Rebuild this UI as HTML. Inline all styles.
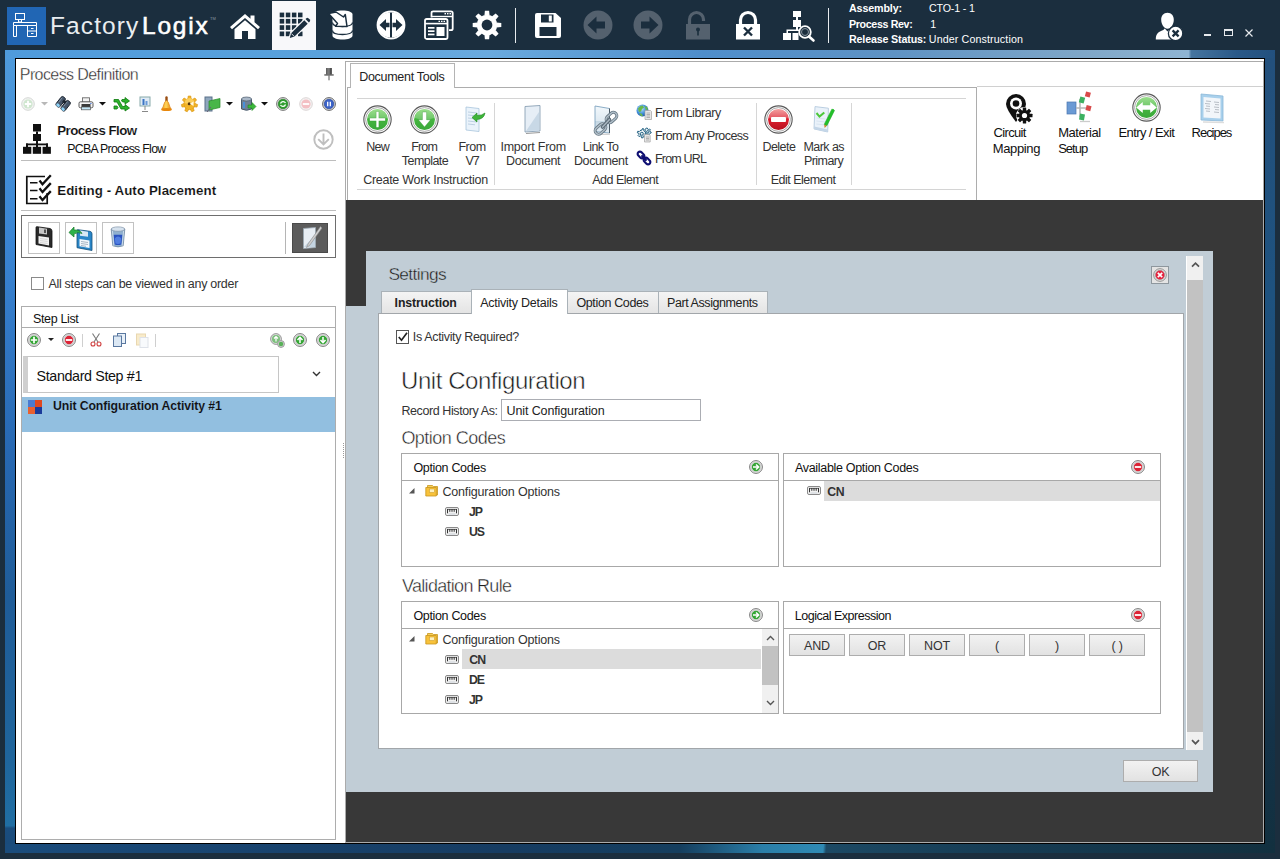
<!DOCTYPE html>
<html><head><meta charset="utf-8"><title>FactoryLogix</title>
<style>
*{box-sizing:border-box;margin:0;padding:0}
html,body{width:1280px;height:859px;overflow:hidden}
body{background:#1b2e3e;font-family:"Liberation Sans",sans-serif;font-size:12px;color:#1a1a1a;position:relative}
.a{position:absolute}
.t{position:absolute;white-space:nowrap;line-height:1}
.b{font-weight:bold}
svg{position:absolute;overflow:visible}
#band{left:5px;top:50px;width:1270px;height:803px;background:linear-gradient(180deg,#4f9bdc 0%,#3a84d2 25%,#2768b2 50%,#1f5c98 68%,#1f659c 88%,#206ea3 96.6%,#1a4d7e 96.9%,#1a4a78 100%)}
#bandtop{left:5px;top:50px;width:1270px;height:9px;background:linear-gradient(90deg,#4f9bdc 0%,#5aa2dc 25%,#6aaade 38%,#4f8ecb 55%,#5f93c4 70%,#7fa7c8 85%,#8fb4d2 93%,#8fb4d2 93.2%,#46759f 93.4%,#2a5988 97%,#22507e 100%)}
#bandright{left:1264px;top:58px;width:11px;height:795px;background:linear-gradient(180deg,#23507c 0%,#1e527f 30%,#1a4468 60%,#143248 85%,#12303f 100%)}
#bandbot{left:5px;top:844px;width:1270px;height:9px;background:linear-gradient(95deg,#1a4c7c 0.87%,#18426c 23.23%,#163c62 38.98%,#153e5e 53.15%,#2a7ea8 59.61%,#2f8ab4 64.41%,#1c4964 64.65%,#163c54 78.35%,#12303f 100.00%)}
#frame{left:15px;top:58px;width:1250px;height:786px;background:#000}
#main{left:16px;top:59px;width:1248px;height:784px;background:#fff}
.lb{position:absolute;top:634px;width:56px;height:22px;padding-top:1px;border:1px solid #adadad;background:linear-gradient(180deg,#f2f2f2,#e2e2e2);text-align:center;line-height:20px;font-size:12.500px;color:#333;letter-spacing:-0.2px}
</style></head><body>
<div class="a" id="band"></div>
<div class="a" id="bandtop"></div>
<div class="a" id="bandright"></div>
<div class="a" id="bandbot"></div>
<div class="a" id="frame"></div>
<div class="a" id="main"></div>
<!--TOPBAR-->
<div class="a" id="topbar" style="left:0;top:0;width:1280px;height:50px;background:#1b2e3e"></div>
<div class="a" style="left:7px;top:7px;width:39px;height:38px;background:#2166b4"></div>
<svg style="left:7px;top:7px" width="39" height="38" viewBox="0 0 39 38" fill="none" stroke="#fff" stroke-width="1"><rect x="8.5" y="6.5" width="9" height="6"/><path d="M11.5 12.5v2.5h3v-2.5M6.500 15.5h23v3h-23zM6.500 18.500v11h3v-11M20.500 18.500v11h9v-11M20.500 24h9M24 21.500h2.500M24 26.500h2.500"/></svg>
<div class="t" style="left:50px;top:14px;font-size:24.5px;color:#e9edf0;letter-spacing:1.1px">Factory</div>
<div class="t" style="left:142px;top:14px;font-size:24.5px;color:#fff;letter-spacing:1.8px;-webkit-text-stroke:0.55px #fff">Logix</div>
<div class="t" style="left:210px;top:17px;font-size:4px;color:#8a98a4">TM</div>
<!-- home -->
<svg style="left:229px;top:12px" width="32" height="28" viewBox="0 0 32 28"><path fill="#fff" d="M16 2 L1 15 L3 17.200 L16 6 L29 17.200 L31 15 L25.500 10.200 V3.500 H21.500 V6.800 Z"/><path fill="#fff" d="M16 8.300 L5.500 17.300 V27 H13 V19 H19 V27 H26.500 V17.300 Z"/></svg>
<!-- active tab -->
<div class="a" style="left:272px;top:1px;width:44px;height:49px;background:#f8f8fa"></div>
<svg style="left:279px;top:12px" width="32" height="28" viewBox="0 0 32 28"><g fill="#1b2e3e"><rect x="0.7" y="0.6" width="4.5" height="4.7"/><rect x="6.8" y="0.6" width="4.5" height="4.7"/><rect x="12.9" y="0.6" width="4.5" height="4.7"/><rect x="19.0" y="0.6" width="4.5" height="4.7"/><rect x="0.7" y="6.9" width="4.5" height="4.7"/><rect x="6.8" y="6.9" width="4.5" height="4.7"/><rect x="12.9" y="6.9" width="4.5" height="4.7"/><rect x="19.0" y="6.9" width="4.5" height="4.7"/><rect x="0.7" y="13.2" width="4.5" height="4.7"/><rect x="6.8" y="13.2" width="4.5" height="4.7"/><rect x="12.9" y="13.2" width="4.5" height="4.7"/><rect x="19.0" y="13.2" width="4.5" height="4.7"/><rect x="0.7" y="19.5" width="4.5" height="4.7"/><rect x="6.8" y="19.5" width="4.5" height="4.7"/><rect x="12.9" y="19.5" width="4.5" height="4.7"/><rect x="19.0" y="19.5" width="4.5" height="4.7"/></g><g stroke="#f8f8fa" stroke-width="2.400" fill="#1b2e3e" stroke-linejoin="round"><path d="M25.300 8.300L28.700 11.700 15.500 24.500l-4.700 1.500 1.300-4.800z"/><path d="M26.300 7.300l1-1q1-.8 2 0l1.400 1.400q.8 1 0 2l-1 1z"/></g><g fill="#1b2e3e"><path d="M25.300 8.300L28.700 11.700 15.500 24.500l-4.700 1.500 1.300-4.800z"/><path d="M26.500 7.100l.9-.9q1-.8 2 0l1.400 1.400q.8 1 0 2l-.9.900z"/></g><path d="M12.300 21.500l2.800 2.800" stroke="#f8f8fa" stroke-width=".9"/></svg>
<!-- db import -->
<svg style="left:329px;top:10px" width="28" height="30" viewBox="0 0 28 30"><path fill="#fff" d="M3.500 4.500C3.500 2 8 .5 13.500 .5S23.500 2 23.500 4.500V25.500C23.500 28 19 29.500 13.500 29.500S3.500 28 3.500 25.500z"/><path d="M3.500 12.500c0 2.500 4.500 4 10 4s10-1.500 10-4M3.500 20.500c0 2.500 4.500 4 10 4s10-1.500 10-4" fill="none" stroke="#1b2e3e" stroke-width="1.300"/><path d="M-.5 3.500L7 2l7.500 5 1.800-2.500 1.700 12-11.500-.3 2-2.700L4.500 9z" fill="#fff" stroke="#1b2e3e" stroke-width="1.500" stroke-linejoin="round"/></svg>
<!-- circle arrows -->
<svg style="left:376px;top:10px" width="30" height="30" viewBox="0 0 30 30"><circle cx="15" cy="15" r="13.500" fill="none" stroke="#fff" stroke-width="1.800"/><path fill="#fff" d="M14 2.500A12.500 12.500 0 0 0 14 27.500zM16 2.500A12.500 12.500 0 0 1 16 27.500z"/><path fill="#1b2e3e" d="M3.500 15l6.500-6v3.700h3.500v4.600H10V21zM26.500 15L20 9v3.700h-3.500v4.600H20V21z"/></svg>
<!-- windows -->
<svg style="left:424px;top:10px" width="30" height="30" viewBox="0 0 30 30"><g fill="none" stroke="#fff" stroke-width="1.800"><path d="M7.500 7.500V3Q7.500 1.300 9.200 1.300H27Q28.700 1.300 28.700 3V18.500Q28.700 20.200 27 20.200H25"/><rect x="1" y="9" width="22.500" height="20" rx="1.800"/></g><g fill="#fff"><path d="M8 5.800h20v1.400H8z"/><rect x="1" y="12.800" width="22.500" height="1.600"/><rect x="4" y="17" width="6.500" height="1.700"/><rect x="4" y="20.300" width="6.500" height="1.700"/><rect x="4" y="23.600" width="6.500" height="1.700"/><rect x="12.500" y="17" width="8" height="9"/><rect x="20.500" y="3" width="1.500" height="1.400"/><rect x="23" y="3" width="1.500" height="1.400"/><rect x="25.500" y="3" width="1.500" height="1.400"/><rect x="14.500" y="10.700" width="1.500" height="1.300"/><rect x="17" y="10.700" width="1.500" height="1.300"/><rect x="19.500" y="10.700" width="1.500" height="1.300"/></g></svg>
<!-- gear -->
<svg style="left:472px;top:10px" width="30" height="30" viewBox="-15 -15 30 30"><g fill="#fff"><circle r="10.300"/><g><path d="M-2.600 -9.500L-2.100 -14.300H2.100L2.600 -9.500z"/></g><g transform="rotate(45)"><path d="M-2.600 -9.500L-2.100 -14.300H2.100L2.600 -9.500z"/></g><g transform="rotate(90)"><path d="M-2.600 -9.500L-2.100 -14.300H2.100L2.600 -9.500z"/></g><g transform="rotate(135)"><path d="M-2.600 -9.500L-2.100 -14.300H2.100L2.600 -9.500z"/></g><g transform="rotate(180)"><path d="M-2.600 -9.500L-2.100 -14.300H2.100L2.600 -9.500z"/></g><g transform="rotate(225)"><path d="M-2.600 -9.500L-2.100 -14.300H2.100L2.600 -9.500z"/></g><g transform="rotate(270)"><path d="M-2.600 -9.500L-2.100 -14.300H2.100L2.600 -9.500z"/></g><g transform="rotate(315)"><path d="M-2.600 -9.500L-2.100 -14.300H2.100L2.600 -9.500z"/></g></g><circle r="5.400" fill="#1b2e3e"/></svg>
<div class="a" style="left:515px;top:8px;width:1px;height:35px;background:#e8ecef"></div>
<!-- save -->
<svg style="left:535px;top:13px" width="26" height="25" viewBox="0 0 26 25"><path fill="#fff" d="M2 0h18.500L26 5v18q0 2-2 2H2q-2 0-2-2V2q0-2 2-2z"/><rect x="6" y="1.500" width="12.500" height="8" fill="#1b2e3e"/><rect x="13.800" y="2.500" width="3" height="6" fill="#fff"/><rect x="4.500" y="14" width="17" height="9" fill="#1b2e3e"/></svg>
<!-- back dim -->
<svg style="left:583px;top:10px" width="30" height="30" viewBox="0 0 30 30"><circle cx="15" cy="15" r="14.500" fill="#54616e"/><path fill="#1b2e3e" d="M4.500 15l9-8.500v5H22v7h-8.500v5z"/></svg>
<svg style="left:633px;top:10px" width="30" height="30" viewBox="0 0 30 30"><circle cx="15" cy="15" r="14.500" fill="#54616e"/><path fill="#1b2e3e" d="M25.500 15l-9-8.500v5H8v7h8.500v5z"/></svg>
<!-- unlock dim -->
<svg style="left:685px;top:11px" width="26" height="29" viewBox="0 0 26 29"><path d="M4.500 14V8.500a7 7 0 0 1 14 0V10" fill="none" stroke="#54616e" stroke-width="3.200"/><rect x="1" y="13" width="24" height="15.500" fill="#54616e"/><circle cx="13" cy="18.500" r="2" fill="#1b2e3e"/><rect x="12.200" y="19" width="1.600" height="5.500" fill="#1b2e3e"/></svg>
<!-- lock x -->
<svg style="left:735px;top:11px" width="26" height="29" viewBox="0 0 26 29"><path d="M5.500 14V9a7.500 7.500 0 0 1 15 0V14" fill="none" stroke="#fff" stroke-width="3.200"/><rect x="1" y="13" width="24" height="15.500" fill="#fff"/><path d="M9 16.500l8 8M17 16.500l-8 8" stroke="#1b2e3e" stroke-width="2.400"/></svg>
<!-- flow search -->
<svg style="left:783px;top:10px" width="32" height="32" viewBox="0 0 32 32"><g fill="#fff"><rect x="10" y="1" width="8" height="6"/><rect x="13" y="7" width="2" height="3"/><rect x="10" y="10" width="8" height="7"/><rect x="13" y="17" width="2" height="3"/><path d="M3.500 19.500h14v1.500h-12.500v3h-1.500z"/><rect x="0" y="23" width="8" height="7"/><rect x="9.500" y="23" width="6" height="7"/></g><circle cx="22" cy="22" r="5.800" fill="#1b2e3e" stroke="#fff" stroke-width="1.800"/><circle cx="22" cy="22" r="3.500" fill="none" stroke="#8a96a0" stroke-width="1"/><path d="M26 26.500l4.500 4" stroke="#fff" stroke-width="2.600" stroke-linecap="round"/></svg>
<div class="a" style="left:828px;top:8px;width:1px;height:35px;background:#e8ecef"></div>
<div class="t b" style="left:849.0px;top:3px;font-size:10.7px;color:#fff;letter-spacing:-0.13px">Assembly:</div>
<div class="t" style="left:929.0px;top:3px;font-size:10.7px;color:#fff;letter-spacing:-0.17px">CTO-1 - 1</div>
<div class="t b" style="left:849.0px;top:19px;font-size:10.7px;color:#fff;letter-spacing:-0.36px">Process Rev:</div>
<div class="t" style="left:930.2px;top:19px;font-size:10.7px;color:#fff;letter-spacing:0.00px">1</div>
<div class="t b" style="left:849.0px;top:34px;font-size:10.7px;color:#fff;letter-spacing:-0.16px">Release Status:</div>
<div class="t" style="left:928.8px;top:34px;font-size:10.7px;color:#fff;letter-spacing:0.12px">Under Construction</div>
<!-- user -->
<svg style="left:1155px;top:12px" width="30" height="30" viewBox="0 0 30 30"><g fill="#fff"><path d="M12.500 .8c4 0 6.300 3 6.300 7 0 4.500-2.800 9-6.300 9s-6.300-4.500-6.300-9c0-4 2.300-7 6.300-7z"/><path d="M.8 27.500c0-6 2.500-7.500 7.500-9.500l1.500-1.500 2.700 3 2.700-3 1.500 1.500c2 .8 3.500 1.500 4.500 2.500L18 27.500z"/></g><circle cx="20.600" cy="21.400" r="7.200" fill="#fff" stroke="#1b2e3e" stroke-width="1.300"/><path d="M17.600 18.400l6 6M23.600 18.400l-6 6" stroke="#1b2e3e" stroke-width="2.300"/></svg>
<div class="a" style="left:1204px;top:34px;width:7px;height:2px;background:#e6e9ec"></div>
<div class="a" style="left:1224px;top:29px;width:9px;height:7px;border:1px solid #e6e9ec;border-top-width:2px"></div>
<svg style="left:1245px;top:28.500px" width="8" height="8" viewBox="0 0 8 8"><path d="M.5.500l7 7M7.500.500l-7 7" stroke="#e6e9ec" stroke-width="1.200"/></svg>
<!--/TOPBAR-->
<!--LEFT-->
<div class="t" style="left:19.8px;top:67px;font-size:16px;color:#222;letter-spacing:-0.59px;-webkit-text-stroke:0.35px #fff">Process Definition</div>
<!-- pin -->
<svg style="left:324px;top:68px" width="10" height="13" viewBox="0 0 10 13"><rect x="2.200" y="0" width="5.600" height="6.500" fill="#7a7a7a"/><rect x="5.800" y="0" width="2" height="6.500" fill="#505050"/><rect x="2.200" y="0" width="1" height="6.500" fill="#555"/><rect x=".3" y="6.300" width="9.400" height="1.300" fill="#555"/><rect x="4.500" y="7.500" width="1" height="4.800" fill="#555"/></svg>
<!-- toolbar row y=104 -->
<svg style="left:21px;top:97px" width="14" height="14" viewBox="0 0 14 14"><circle cx="7" cy="7" r="6.300" fill="#f2f4f2" stroke="#d5d8d5"/><circle cx="7" cy="7" r="4.600" fill="#cfe6cf"/><path d="M7 3.800v6.400M3.800 7h6.400" stroke="#fff" stroke-width="1.800"/></svg>
<svg style="left:41px;top:102px" width="7" height="4" viewBox="0 0 7 4"><path d="M0 0h7L3.500 3.500z" fill="#b8b8b8"/></svg>
<svg style="left:55px;top:97px" width="16" height="14" viewBox="0 0 16 14"><g transform="rotate(38 8 7)"><rect x="2.300" y="1" width="5" height="11.500" rx="2" fill="#46566a" stroke="#1c2530" stroke-width=".9"/><rect x="8.700" y="1" width="5" height="11.500" rx="2" fill="#46566a" stroke="#1c2530" stroke-width=".9"/><rect x="6" y="3" width="4" height="3" fill="#1c2530"/><ellipse cx="4.800" cy="11" rx="2" ry="1.500" fill="#8fd2f6"/><ellipse cx="11.200" cy="11" rx="2" ry="1.500" fill="#8fd2f6"/><path d="M3.500 2.500v6M10 2.500v6" stroke="#8a9aac" stroke-width=".8"/></g></svg>
<svg style="left:78px;top:97px" width="16" height="14" viewBox="0 0 16 14"><rect x="4.500" y=".8" width="7" height="4.500" fill="#f2f2f2" stroke="#6a6a6a" stroke-width=".9"/><rect x="1" y="4.800" width="14" height="6" rx="1.500" fill="#f4f4f4" stroke="#4a4a4a" stroke-width=".9"/><rect x="3.500" y="7" width="9" height="3.500" fill="#3a3a3a"/><rect x="3.500" y="10" width="9" height="2.800" fill="#c4e8f8" stroke="#555" stroke-width=".7"/><rect x="12.300" y="6" width="1.200" height="1" fill="#3a6ad8"/></svg>
<svg style="left:99px;top:102px" width="7" height="4" viewBox="0 0 7 4"><path d="M0 0h7L3.500 3.500z" fill="#111"/></svg>
<svg style="left:113px;top:97px" width="17" height="14" viewBox="0 0 17 14"><path d="M1 2.500h4.500l4 7H12V7.500L16.500 11 12 14v-2H8l-4-7H1zM1 9h3l1 1.500-1 1.500H1zM9 2.500h3V.500L16.500 4 12 7V5h-2L8.500 4z" fill="#2db32d" stroke="#0c7a0c" stroke-width=".8"/></svg>
<svg style="left:138px;top:96px" width="14" height="16" viewBox="0 0 14 16"><rect x="2" y="1" width="10" height="9" fill="#dfeaf5" stroke="#8aa"/><rect x="4.500" y="3" width="2" height="6" fill="#3b74c4"/><rect x="7.500" y="5" width="2" height="4" fill="#6a9ad8"/><path d="M7 10v4M4 15.500h6" stroke="#888" stroke-width="1"/></svg>
<svg style="left:160px;top:96px" width="13" height="16" viewBox="0 0 13 16"><defs><linearGradient id="bl" x1="0" y1="0" x2="1" y2="0"><stop offset="0" stop-color="#f09a18"/><stop offset=".45" stop-color="#ffd45a"/><stop offset="1" stop-color="#e8860c"/></linearGradient></defs><rect x="5.300" y=".3" width="2.400" height="5.500" rx="1.200" fill="#9a4e12"/><path d="M6.500 4.500C3.800 5.500 4 10 1.800 13.200H11.200C9 10 9.200 5.500 6.500 4.500z" fill="url(#bl)" stroke="#d87808" stroke-width=".6"/><ellipse cx="6.500" cy="13.600" rx="5.300" ry="1.500" fill="#e8880c"/></svg>
<svg style="left:181px;top:96px" width="17" height="16" viewBox="-8.500 -8 17 16"><g fill="#f2b428" stroke="#d89410" stroke-width=".6"><circle r="5.600"/><path d="M-1.700 -5L-1.300 -8H1.300L1.700 -5z" transform="rotate(0.0)"/><path d="M-1.700 -5L-1.300 -8H1.300L1.700 -5z" transform="rotate(51.4)"/><path d="M-1.700 -5L-1.300 -8H1.300L1.700 -5z" transform="rotate(102.9)"/><path d="M-1.700 -5L-1.300 -8H1.300L1.700 -5z" transform="rotate(154.3)"/><path d="M-1.700 -5L-1.300 -8H1.300L1.700 -5z" transform="rotate(205.7)"/><path d="M-1.700 -5L-1.300 -8H1.300L1.700 -5z" transform="rotate(257.1)"/><path d="M-1.700 -5L-1.300 -8H1.300L1.700 -5z" transform="rotate(308.6)"/></g><circle r="5.200" fill="#f2b428"/><path d="M-5 -1a5 5 0 0 1 10 0q-5 2-10 0z" fill="#ffd870" opacity=".7"/><circle cx="-.3" cy="-.3" r="1.500" fill="#5a3a10"/><path d="M.3 -.3L4 -2.500V2z" fill="#fff8e0"/></svg>
<svg style="left:204px;top:96px" width="18" height="17" viewBox="0 0 18 17"><rect x="1" y="1" width="7" height="14" fill="#8fa6bd" stroke="#5a718a"/><path d="M5 5l11-2.500v9L5 14z" fill="#49b649" stroke="#2a8a2a" stroke-width=".7"/><path d="M3 16l4-5" stroke="#667" stroke-width="1"/></svg>
<svg style="left:226px;top:102px" width="7" height="4" viewBox="0 0 7 4"><path d="M0 0h7L3.500 3.500z" fill="#111"/></svg>
<svg style="left:240px;top:96px" width="16" height="16" viewBox="0 0 16 16"><path d="M1.500 3h10v10q-5 2.500-10 0z" fill="#6f8196" stroke="#4a5a6c"/><ellipse cx="6.500" cy="3" rx="5" ry="2" fill="#aab8c8" stroke="#4a5a6c" stroke-width=".7"/><path d="M8 9h4V6.500l4 4-4 4V12H8z" fill="#3cb83c" stroke="#1e8a1e" stroke-width=".6"/><rect x="3" y="6" width="2" height="6" fill="#4a90d8"/></svg>
<svg style="left:261px;top:102px" width="7" height="4" viewBox="0 0 7 4"><path d="M0 0h7L3.500 3.500z" fill="#111"/></svg>
<svg style="left:276px;top:97px" width="14" height="14" viewBox="0 0 14 14"><circle cx="7" cy="7" r="6.400" fill="#e6e6e6" stroke="#777"/><circle cx="7" cy="7" r="4.800" fill="#2f9e2f" stroke="#1b6e1b" stroke-width=".6"/><path d="M4.500 6.500a2.700 2.700 0 0 1 5-.5M9.500 7.500a2.700 2.700 0 0 1-5 .5" stroke="#fff" stroke-width="1.200" fill="none"/></svg>
<svg style="left:299px;top:97px" width="14" height="14" viewBox="0 0 14 14"><circle cx="7" cy="7" r="6.300" fill="#f4f2f2" stroke="#dcd6d6"/><circle cx="7" cy="7" r="4.600" fill="#f3c0c4"/><path d="M3.800 7h6.400" stroke="#fff" stroke-width="1.800"/></svg>
<svg style="left:322px;top:97px" width="14" height="14" viewBox="0 0 14 14"><circle cx="7" cy="7" r="6.400" fill="#e0e0e0" stroke="#666"/><circle cx="7" cy="7" r="4.800" fill="#3a62c8" stroke="#23408e" stroke-width=".6"/><path d="M5.700 4.800v4.400M8.300 4.800v4.400" stroke="#fff" stroke-width="1.300"/></svg>
<!-- process flow -->
<svg style="left:23px;top:124px" width="28" height="31" viewBox="0 0 28 31"><g fill="#111"><rect x="10" y="0" width="8" height="7.500"/><rect x="13" y="7.500" width="2" height="2.500"/><rect x="10" y="10" width="8" height="7"/><rect x="13" y="17" width="2" height="3"/><rect x="3" y="19.500" width="22" height="1.800"/><rect x="3" y="19.500" width="2" height="4"/><rect x="13" y="19.500" width="2" height="4"/><rect x="23" y="19.500" width="2" height="4"/><rect x="0" y="22.800" width="8.300" height="7"/><rect x="9.800" y="22.800" width="8.300" height="7"/><rect x="19.600" y="22.800" width="8.300" height="7"/></g></svg>
<div class="t b" style="left:57.2px;top:124px;font-size:13.3px;color:#111;letter-spacing:-0.52px;-webkit-text-stroke:0.12px #fff">Process Flow</div>
<div class="t" style="left:67.2px;top:143px;font-size:12.3px;color:#111;letter-spacing:-0.69px">PCBA Process Flow</div>
<svg style="left:313px;top:129px" width="21" height="21" viewBox="0 0 21 21"><circle cx="10.500" cy="10.500" r="9.200" fill="#fff" stroke="#bfbfbf" stroke-width="1.900"/><path d="M10.500 4.500v11M5.200 10.200l5.300 5.300 5.300-5.300" fill="none" stroke="#bfbfbf" stroke-width="1.900"/></svg>
<div class="a" style="left:21px;top:160px;width:315px;height:1px;background:#bdbdbd"></div>
<!-- editing icon -->
<svg style="left:25px;top:174px" width="28" height="32" viewBox="0 0 28 32"><path d="M20 2.500H1.800v27h20.400V19" fill="#fff" stroke="#111" stroke-width="1.700"/><path d="M5 8.700h7.500M5 16.600h7.500M5 24.800h7.500" stroke="#111" stroke-width="1.500"/><path d="M14.500 6.500l3 3.800 8.300-9M14.500 14.300l3 3.800 8.300-9M14.500 22.300l3 3.800 8.300-9" fill="none" stroke="#111" stroke-width="2.300" stroke-linejoin="miter"/></svg>
<div class="t b" style="left:57.2px;top:184px;font-size:13.3px;color:#111;letter-spacing:0.09px;-webkit-text-stroke:0.12px #fff">Editing - Auto Placement</div>
<div class="a" style="left:21px;top:210px;width:315px;height:1px;background:#bdbdbd"></div>
<div class="a" style="left:21px;top:215px;width:315px;height:43px;border:1px solid #6e6e6e;background:#fff"></div>
<div class="a" style="left:28px;top:222px;width:32px;height:32px;border:1px solid #c2c2c2"></div>
<div class="a" style="left:65px;top:222px;width:32px;height:32px;border:1px solid #c2c2c2"></div>
<div class="a" style="left:102px;top:222px;width:32px;height:32px;border:1px solid #c2c2c2"></div>
<svg style="left:35px;top:226px" width="18" height="23" viewBox="0 0 18 23"><path d="M1 1.500Q1 .5 2 .7L15 2.500Q17 3 17 5V21.500L1 18.500z" fill="#2a2a2a" stroke="#111" stroke-width=".8"/><path d="M4 1.500L12 2.800V8.500L4 7.500z" fill="#c8c8c8"/><rect x="9" y="3.500" width="2" height="3.500" fill="#555"/><path d="M3.500 10l10.500 1.500v8L3.500 17.500z" fill="#f2f2f2"/><path d="M5 12.500l7.500 1M5 14.500l7.500 1M5 16.500l7.500 1" stroke="#ccc" stroke-width=".7"/></svg>
<svg style="left:68px;top:225px" width="26" height="27" viewBox="0 0 26 27"><path d="M9 5.500Q9 4.500 10 4.700L22 6.300Q24 6.800 24 8.800V25.500L9 22.700z" fill="#2a86c8" stroke="#14507c" stroke-width=".8"/><path d="M12 5.500l8 1.200v5l-8-1z" fill="#d8e8f4"/><path d="M11.500 14l10 1.500v7.500l-10-1.800z" fill="#f4f8fc"/><path d="M13 16.500l7 1M13 18.500l7 1M13 20.500l5 .8" stroke="#89a" stroke-width=".7"/><path d="M1 7.500L6 2v3q6-.5 8 3.500Q10 6.500 6 9v3z" fill="#2fb24a" stroke="#157a2a" stroke-width=".7"/></svg>
<svg style="left:110px;top:226px" width="16" height="22" viewBox="0 0 20 25" preserveAspectRatio="none"><path d="M1.500 3.500h17l-2 19q-6.500 2.500-13 0z" fill="#8fb0cf" stroke="#607a94" stroke-width=".8"/><ellipse cx="10" cy="3.500" rx="8.500" ry="2.500" fill="#d6e2ee" stroke="#7a8ea4" stroke-width=".8"/><path d="M4.500 10l11 0-1.300 11q-4.200 1.400-8.400 0z" fill="#2a52c0"/><path d="M6 14q4-4 8 0l-.8 6q-3.200 1-6.400 0z" fill="#5a8ae8" opacity=".8"/><path d="M3 5.500l1.800 17M17 5.500l-1.800 17" stroke="#e8f0f8" stroke-width="1" opacity=".8"/></svg>
<div class="a" style="left:285px;top:222px;width:1px;height:32px;background:#b5b5b5"></div>
<div class="a" style="left:292px;top:223px;width:36px;height:30px;background:#5c5c5c;border:1px solid #4a4a4a"></div>
<svg style="left:299px;top:225px" width="24" height="26" viewBox="0 0 24 26"><path d="M4.500 3.500L16.500 2.500V22.500L4.500 23.500z" fill="#e8eef4" stroke="#9aa8b4" stroke-width=".8"/><path d="M5 22l11-12v12z" fill="#c4d4e2"/><path d="M21.500 1.500L9 19l-1.500 3.500 3.200-2.200L23 3z" fill="#cfcfcf" stroke="#8a8a8a" stroke-width=".6"/></svg>
<!-- checkbox -->
<div class="a" style="left:31px;top:277px;width:13px;height:13px;border:1px solid #8a8a8a;background:#fff"></div>
<div class="t" style="left:48.4px;top:278px;font-size:12.5px;color:#333;letter-spacing:-0.29px">All steps can be viewed in any order</div>
<!-- step list -->
<div class="a" style="left:21px;top:306px;width:315px;height:534px;border:1px solid #adadad;background:#fff"></div>
<div class="t" style="left:33px;top:313px;font-size:12.5px;color:#111;letter-spacing:-0.35px">Step List</div>
<div class="a" style="left:21px;top:327px;width:315px;height:1px;background:#adadad"></div>
<svg style="left:27px;top:333px" width="14" height="14" viewBox="0 0 14 14"><circle cx="7" cy="7" r="6.400" fill="#f4f4f4" stroke="#6a6a6a" stroke-width=".9"/><circle cx="7" cy="7" r="5" fill="none" stroke="#b0b0b0" stroke-width=".7"/><circle cx="7" cy="7" r="4.200" fill="#35a535"/><path d="M7 3.800v6.400M3.800 7h6.400" stroke="#fff" stroke-width="1.700"/></svg>
<svg style="left:48px;top:338px" width="6" height="3" viewBox="0 0 6 3"><path d="M0 0h6L3 3z" fill="#222"/></svg>
<svg style="left:62px;top:333px" width="14" height="14" viewBox="0 0 14 14"><circle cx="7" cy="7" r="6.400" fill="#f4f4f4" stroke="#6a6a6a" stroke-width=".9"/><circle cx="7" cy="7" r="5" fill="none" stroke="#b0b0b0" stroke-width=".7"/><circle cx="7" cy="7" r="4.200" fill="#dc2436"/><path d="M3.800 7h6.400" stroke="#fff" stroke-width="1.800"/></svg>
<div class="a" style="left:82px;top:334px;width:1px;height:13px;background:#cfcfcf"></div>
<svg style="left:90px;top:333px" width="12" height="14" viewBox="0 0 12 14"><path d="M2.500 0.500L8 9M9.500 0.500L4 9" stroke="#7a7a7a" stroke-width="1.100" fill="none"/><circle cx="3" cy="11" r="2" fill="none" stroke="#d04040" stroke-width="1.100"/><circle cx="9" cy="11" r="2" fill="none" stroke="#d04040" stroke-width="1.100"/></svg>
<svg style="left:113px;top:333px" width="13" height="14" viewBox="0 0 13 14"><rect x="4.500" y=".5" width="8" height="10" fill="#e8f0f8" stroke="#5a78a0"/><rect x=".5" y="3" width="8" height="10.500" fill="#dce8f4" stroke="#5a78a0"/></svg>
<svg style="left:136px;top:333px" width="13" height="15" viewBox="0 0 13 15" opacity=".55"><rect x=".5" y="1" width="9" height="11" fill="#f4dca0" stroke="#d8b870"/><rect x="4" y="4.500" width="8" height="10" fill="#f4f6fa" stroke="#c4ccd8"/></svg>
<div class="a" style="left:155px;top:334px;width:1px;height:13px;background:#cfcfcf"></div>
<svg style="left:270px;top:333px" width="15" height="15" viewBox="0 0 15 15"><circle cx="6" cy="6" r="5.400" fill="#dcdcdc" stroke="#999"/><circle cx="6" cy="6" r="4" fill="#7cc07c"/><path d="M6 3.500v5M4 5.500l2-2 2 2" stroke="#fff" stroke-width="1.200" fill="none"/><circle cx="11" cy="11" r="3.400" fill="#dcdcdc" stroke="#999"/><circle cx="11" cy="11" r="2.300" fill="#58b058"/></svg>
<svg style="left:293px;top:333px" width="14" height="14" viewBox="0 0 14 14"><circle cx="7" cy="7" r="6.400" fill="#f4f4f4" stroke="#6a6a6a" stroke-width=".9"/><circle cx="7" cy="7" r="5" fill="none" stroke="#b0b0b0" stroke-width=".7"/><circle cx="7" cy="7" r="4.200" fill="#35a535"/><path d="M7 10V5M4.500 7L7 4.300 9.500 7" stroke="#fff" stroke-width="1.500" fill="none"/></svg>
<svg style="left:316px;top:333px" width="14" height="14" viewBox="0 0 14 14"><circle cx="7" cy="7" r="6.400" fill="#f4f4f4" stroke="#6a6a6a" stroke-width=".9"/><circle cx="7" cy="7" r="5" fill="none" stroke="#b0b0b0" stroke-width=".7"/><circle cx="7" cy="7" r="4.200" fill="#35a535"/><path d="M7 4v5M4.500 7L7 9.700 9.500 7" stroke="#fff" stroke-width="1.500" fill="none"/></svg>
<div class="a" style="left:23px;top:356px;width:256px;height:37px;border:1px solid #c6c6c6;background:#fff;border-left:5px solid #cfcfcf"></div>
<div class="t" style="left:36.6px;top:369px;font-size:14.3px;color:#111;letter-spacing:-0.37px">Standard Step #1</div>
<svg style="left:312px;top:371px" width="9" height="6" viewBox="0 0 9 6"><path d="M1 1l3.500 3.500L8 1" fill="none" stroke="#333" stroke-width="1.400"/></svg>
<div class="a" style="left:22px;top:397px;width:313px;height:35px;background:#92bfe0"></div>
<svg style="left:28px;top:400px" width="14" height="14" viewBox="0 0 14 14"><rect x="0" y="0" width="7" height="7" fill="#4a7ad0"/><rect x="7" y="0" width="7" height="7" fill="#e04820"/><rect x="0" y="7" width="7" height="7" fill="#e86030"/><rect x="7" y="7" width="7" height="7" fill="#1a3a9a"/></svg>
<div class="t b" style="left:53.0px;top:400px;font-size:12.3px;color:#111;letter-spacing:-0.12px;-webkit-text-stroke:0.1px #92bfe0">Unit Configuration Activity #1</div>
<!-- splitter -->
<div class="a" style="left:343px;top:443px;width:1px;height:15px;background:repeating-linear-gradient(180deg,#999 0 1px,#fff 1px 2px)"></div>
<!--/LEFT-->
<!--RIBBON-->
<!-- ribbon: white bg y59-200 -->
<div class="a" style="left:347px;top:87px;width:630px;height:113px;border:1px solid #adadad;border-bottom:none;background:#fff"></div>
<div class="a" style="left:977px;top:86px;width:286px;height:1px;background:#d0d0d0"></div>
<div class="a" style="left:350px;top:63px;width:105px;height:25px;border:1px solid #b4b4b4;border-bottom:none;background:#fff"></div>
<div class="t" style="left:359.2px;top:71px;font-size:12.5px;color:#222;letter-spacing:-0.29px">Document Tools</div>
<div class="a" style="left:357px;top:98px;width:609px;height:1px;background:#d4d4d4"></div>
<div class="a" style="left:357px;top:189px;width:609px;height:1px;background:#d4d4d4"></div>
<div class="a" style="left:494px;top:103px;width:1px;height:82px;background:#d6d6d6"></div>
<div class="a" style="left:756px;top:103px;width:1px;height:82px;background:#d6d6d6"></div>
<div class="a" style="left:851px;top:103px;width:1px;height:82px;background:#d6d6d6"></div>
<!-- New -->
<svg style="left:363px;top:105px" width="29" height="29" viewBox="0 0 31 31"><defs><linearGradient id="gg" x1="0" y1="0" x2="0" y2="1"><stop offset="0" stop-color="#7fd66c"/><stop offset=".5" stop-color="#45b53f"/><stop offset="1" stop-color="#3aa83a"/></linearGradient><linearGradient id="gr" x1="0" y1="0" x2="0" y2="1"><stop offset="0" stop-color="#f08a8a"/><stop offset=".5" stop-color="#dc1e2e"/><stop offset="1" stop-color="#b8101e"/></linearGradient><linearGradient id="gs" x1="0" y1="0" x2="0" y2="1"><stop offset="0" stop-color="#f4f4f4"/><stop offset="1" stop-color="#a8a8a8"/></linearGradient></defs><circle cx="15.500" cy="15.500" r="14.600" fill="#fff" stroke="#5a5a5a" stroke-width="1.200"/><circle cx="15.500" cy="15.500" r="12.700" fill="#fff" stroke="#9a9a9a" stroke-width=".9"/><circle cx="15.500" cy="15.500" r="11.200" fill="url(#gg)"/><path d="M4.800 13.500a10.800 10.800 0 0 1 21.400 0q-10.700 4-21.400 0z" fill="#fff" opacity=".22"/><path d="M15.500 7v17M7 15.500h17" stroke="#2f8f2f" stroke-width="3.600" opacity=".5"/><path d="M15.500 7.300v16.400M7.300 15.500h16.400" stroke="#fff" stroke-width="2.500"/></svg>
<div class="t" style="left:366.2px;top:141px;font-size:12.5px;color:#333;letter-spacing:-0.70px">New</div>
<!-- From Template -->
<svg style="left:410px;top:105px" width="29" height="29" viewBox="0 0 31 31"><circle cx="15.500" cy="15.500" r="14.600" fill="#fff" stroke="#5a5a5a" stroke-width="1.200"/><circle cx="15.500" cy="15.500" r="12.700" fill="#fff" stroke="#9a9a9a" stroke-width=".9"/><circle cx="15.500" cy="15.500" r="11.200" fill="url(#gg)"/><path d="M4.800 13.500a10.800 10.800 0 0 1 21.400 0q-10.700 4-21.400 0z" fill="#fff" opacity=".22"/><path d="M13.300 7.500h4.400v8.300h4.300l-6.500 7.700-6.500-7.700h4.300z" fill="#fff" stroke="#2f8f2f" stroke-width=".6" stroke-opacity=".6"/></svg>
<div class="t" style="left:411.2px;top:141px;font-size:12.5px;color:#333;letter-spacing:-0.83px">From</div>
<div class="t" style="left:401.8px;top:155px;font-size:12.5px;color:#333;letter-spacing:-0.54px">Template</div>
<!-- From V7 -->
<svg style="left:463px;top:105px" width="24" height="30" viewBox="0 0 24 30"><path d="M3 2l13 1.500v23L3 25z" fill="#eaf3fb" stroke="#a8c4dc" stroke-width=".8"/><path d="M5 7l9 1M5 10l9 1M5 13l9 1M5 16l9 1M5 19l7 .8" stroke="#b8cce0" stroke-width=".9"/><path d="M22 8q-1 6-8 6.500V17l-5-4.500 5-4.500v2.500q5 0 8-2.500z" fill="#3fb53a" stroke="#1e8a1e" stroke-width=".6"/></svg>
<div class="t" style="left:458.4px;top:141px;font-size:12.5px;color:#333;letter-spacing:-0.46px">From</div>
<div class="t" style="left:465.6px;top:155px;font-size:12.5px;color:#333;letter-spacing:-1.20px">V7</div>
<div class="t" style="left:363.2px;top:174px;font-size:12.5px;color:#333;letter-spacing:-0.28px">Create Work Instruction</div>
<!-- Import From Document -->
<svg style="left:522px;top:104px" width="22" height="32" viewBox="0 0 22 32"><path d="M3 2.500L18 1.500V27L3 28z" fill="#e6eef6" stroke="#8aa0b4" stroke-width=".9"/><path d="M4 27L17 8v18.500z" fill="#c8d8e6"/><path d="M4 29.500l14-1" stroke="#999" stroke-width="1.200"/></svg>
<div class="t" style="left:500.4px;top:141px;font-size:12.5px;color:#333;letter-spacing:-0.22px">Import From</div>
<div class="t" style="left:506.0px;top:155px;font-size:12.5px;color:#333;letter-spacing:-0.34px">Document</div>
<!-- Link to document -->
<svg style="left:590px;top:104px" width="30" height="32" viewBox="0 0 30 32"><defs><linearGradient id="pg" x1="0" y1="0" x2="0" y2="1"><stop offset="0" stop-color="#f2f8fc"/><stop offset=".55" stop-color="#dfeaf2"/><stop offset=".56" stop-color="#c4d6e2"/><stop offset="1" stop-color="#e4eef5"/></linearGradient></defs><path d="M5 2L19.500 4.500V29L5 27.500z" fill="url(#pg)" stroke="#7fa4c0" stroke-width=".9"/><path d="M19.500 4.500V29" stroke="#4a5a66" stroke-width="1"/><path d="M6 30.500l14-.3" stroke="#c8c8c8" stroke-width="1.200"/><g fill="none" stroke-linecap="round"><rect x="-6" y="-3.400" width="12" height="6.800" rx="3.400" transform="translate(21.500 13.500) rotate(-42)" stroke="#6a7a86" stroke-width="3"/><rect x="-6" y="-3.400" width="12" height="6.800" rx="3.400" transform="translate(21.500 13.500) rotate(-42)" stroke="#b4c2cc" stroke-width="1.200"/><rect x="-6" y="-3.400" width="12" height="6.800" rx="3.400" transform="translate(10.500 25) rotate(-42)" stroke="#6a7a86" stroke-width="3"/><rect x="-6" y="-3.400" width="12" height="6.800" rx="3.400" transform="translate(10.500 25) rotate(-42)" stroke="#b4c2cc" stroke-width="1.200"/><path d="M12.500 23l7-7.500" stroke="#5a6a76" stroke-width="3.600"/><path d="M12.500 23l7-7.500" stroke="#a8b6c0" stroke-width="1.400"/></g></svg>
<div class="t" style="left:582.8px;top:141px;font-size:12.5px;color:#333;letter-spacing:-0.54px">Link To</div>
<div class="t" style="left:574.0px;top:155px;font-size:12.5px;color:#333;letter-spacing:-0.41px">Document</div>
<!-- small items -->
<svg style="left:636px;top:104px" width="16" height="16" viewBox="0 0 16 16"><defs><radialGradient id="gl" cx=".4" cy=".35" r=".7"><stop offset="0" stop-color="#bfe4fa"/><stop offset=".6" stop-color="#3f8ed8"/><stop offset="1" stop-color="#1f4fa0"/></radialGradient></defs><circle cx="6.500" cy="6.500" r="6" fill="url(#gl)"/><path d="M2 4.500q2-3 4.500-3l1.500 2-2 1.500-1 2.500-2 .5zM8.500 2l2.500 1 1 2.500-2 .5zM3 9l2.500.5 1.500 2.500-2 .3z" fill="#6ab84a"/><path d="M9 6.500h5.500l1 1v8H9z" fill="#e6e6e6" stroke="#a4a4a4" stroke-width=".7"/><path d="M10.500 9h3.500M10.500 10.500h3.500M10.500 12h3.500M10.500 13.500h3.500" stroke="#9a9a9a" stroke-width=".7"/></svg>
<div class="t" style="left:655.0px;top:107px;font-size:12.5px;color:#333;letter-spacing:-0.42px">From Library</div>
<svg style="left:636px;top:127px" width="16" height="16" viewBox="0 0 16 16"><g fill="#eaf2f6" stroke="#1f5f80" stroke-width="1"><path d="M5 3.200l1-.2.500-1.500 1.500.6-.3 1.500.8.800 1.500-.3.600 1.500L9.300 6.200 9 7.200l1.300 1-.9 1.300-1.400-.7-.9.500v1.500H5.500l-.2-1.500-1-.5-1.300.8-1-1.200L3 7.300 2.800 6.300 1.300 5.800l.4-1.500 1.600.2.700-.8z"/><circle cx="5.800" cy="6.800" r="1.500"/><path d="M10.300 1l1 .1.400 1 1 .4 1-.5.700.8-.6.900.3 1 1 .3v1l-1 .3-.5 1-3.200-.2-1.400-2.800.3-2z"/><circle cx="11.800" cy="4.800" r="1.200"/></g><path d="M8.500 7.500H13l1.200 1.200V15H8.500z" fill="#e6e6e6" stroke="#a4a4a4" stroke-width=".7"/><path d="M10 10h3M10 11.500h3M10 13h3" stroke="#9a9a9a" stroke-width=".7"/></svg>
<div class="t" style="left:655.0px;top:130px;font-size:12.5px;color:#333;letter-spacing:-0.56px">From Any Process</div>
<svg style="left:636px;top:150px" width="16" height="16" viewBox="0 0 16 16"><g fill="none" stroke="#0e0e72" stroke-width="2.100"><rect x="-3.800" y="-2.300" width="7.600" height="4.600" rx="2.300" transform="translate(5 5) rotate(45)"/><rect x="-3.800" y="-2.300" width="7.600" height="4.600" rx="2.300" transform="translate(11 11) rotate(45)"/></g><path d="M6.200 6.200l3.600 3.600" stroke="#0e0e72" stroke-width="2.400" stroke-linecap="round"/></svg>
<div class="t" style="left:655.0px;top:153px;font-size:12.5px;color:#333;letter-spacing:-0.82px">From URL</div>
<div class="t" style="left:592.2px;top:174px;font-size:12.5px;color:#333;letter-spacing:-0.50px">Add Element</div>
<!-- Delete -->
<svg style="left:764px;top:105px" width="29" height="29" viewBox="0 0 31 31"><circle cx="15.500" cy="15.500" r="14.600" fill="#fff" stroke="#5a5a5a" stroke-width="1.200"/><circle cx="15.500" cy="15.500" r="12.700" fill="#fff" stroke="#9a9a9a" stroke-width=".9"/><circle cx="15.500" cy="15.500" r="11.200" fill="url(#gr)"/><path d="M4.800 13.500a10.800 10.800 0 0 1 21.400 0q-10.700 4-21.400 0z" fill="#fff" opacity=".2"/><rect x="7.500" y="12.800" width="16" height="5.400" rx="1" fill="#fff"/></svg>
<div class="t" style="left:762.4px;top:141px;font-size:12.5px;color:#333;letter-spacing:-0.52px">Delete</div>
<!-- Mark as Primary -->
<svg style="left:812px;top:104px" width="24" height="30" viewBox="0 0 24 30"><path d="M3 2.600L16.400 4.200L15.700 28L2 24.900z" fill="#eaf2fa" stroke="#b4cade" stroke-width=".9"/><path d="M2.200 22.500l13.500 3-.1 2.500L2 24.900z" fill="#c4d6e8"/><path d="M4.500 14l9 1M4.400 17l9 1M4.300 20l9 1" stroke="#d6e2ee" stroke-width=".9"/><path d="M4.500 9l3 3.600 4.800-4.200" fill="none" stroke="#4ec83c" stroke-width="2"/><path d="M19.800 5.200l2.700 1.300-7.600 15.200-2.700-1.300z" fill="#22c028" stroke="#18a020" stroke-width=".5"/><path d="M12.200 20.400l2.700 1.300-2.300 2.300z" fill="#c8862a"/><path d="M19.800 5.200q1.500-1.300 2.700 1.300z" fill="#22c028"/></svg>
<div class="t" style="left:803.4px;top:141px;font-size:12.5px;color:#333;letter-spacing:-0.54px">Mark as</div>
<div class="t" style="left:804.0px;top:155px;font-size:12.5px;color:#333;letter-spacing:-0.57px">Primary</div>
<div class="t" style="left:770.8px;top:174px;font-size:12.5px;color:#333;letter-spacing:-0.52px">Edit Element</div>
<!-- right group -->
<svg style="left:1004px;top:93px" width="30" height="32" viewBox="0 0 30 32"><path d="M12 1a10 10 0 0 1 10 10q0 5-10 18Q2 16 2 11A10 10 0 0 1 12 1z" fill="#111"/><circle cx="12" cy="10.500" r="6" fill="#fff"/><circle cx="12" cy="10.500" r="3.300" fill="#111"/><g transform="translate(20.500 22.500)"><circle r="8.500" fill="#fff"/><g fill="#111"><circle r="5.500"/><g><rect x="-1.700" y="-8" width="3.400" height="4" rx=".5"/></g><g transform="rotate(45)"><rect x="-1.700" y="-8" width="3.400" height="4" rx=".5"/></g><g transform="rotate(90)"><rect x="-1.700" y="-8" width="3.400" height="4" rx=".5"/></g><g transform="rotate(135)"><rect x="-1.700" y="-8" width="3.400" height="4" rx=".5"/></g><g transform="rotate(180)"><rect x="-1.700" y="-8" width="3.400" height="4" rx=".5"/></g><g transform="rotate(225)"><rect x="-1.700" y="-8" width="3.400" height="4" rx=".5"/></g><g transform="rotate(270)"><rect x="-1.700" y="-8" width="3.400" height="4" rx=".5"/></g><g transform="rotate(315)"><rect x="-1.700" y="-8" width="3.400" height="4" rx=".5"/></g></g><circle r="2.600" fill="#fff"/></g></svg>
<div class="t" style="left:993.6px;top:126px;font-size:13px;color:#111;letter-spacing:-0.69px">Circuit</div>
<div class="t" style="left:992.8px;top:142px;font-size:13px;color:#111;letter-spacing:-0.38px">Mapping</div>
<svg style="left:1066px;top:92px" width="30" height="32" viewBox="0 0 30 32"><rect x="1" y="10" width="9" height="12" fill="#6a9ad4" stroke="#4a76b0" stroke-width=".7"/><path d="M10 16h4M14 7v18M14 7h4M14 25h4M14 16h6" stroke="#b8b8b8" stroke-width="1.600" fill="none"/><rect x="13.500" y="5" width="5" height="6" fill="#3cb060" transform="rotate(15 16 8)"/><rect x="19.500" y="0" width="5" height="5" fill="#d84a4a" transform="rotate(15 22 2)"/><rect x="20" y="13.500" width="5" height="5" fill="#d84a4a" transform="rotate(15 22 16)"/><rect x="13.500" y="22" width="5" height="6" fill="#3cb060" transform="rotate(10 16 25)"/><path d="M14 29.500h10" stroke="#ccc" stroke-width="1.300"/></svg>
<div class="t" style="left:1058.2px;top:126px;font-size:13px;color:#111;letter-spacing:-0.48px">Material</div>
<div class="t" style="left:1058.2px;top:142px;font-size:13px;color:#111;letter-spacing:-1.01px">Setup</div>
<svg style="left:1132px;top:93px" width="29" height="29" viewBox="0 0 31 31"><circle cx="15.500" cy="15.500" r="14.600" fill="#fff" stroke="#5a5a5a" stroke-width="1.200"/><circle cx="15.500" cy="15.500" r="12.700" fill="#fff" stroke="#9a9a9a" stroke-width=".9"/><circle cx="15.500" cy="15.500" r="11.200" fill="url(#gg)"/><path d="M4.800 13.500a10.800 10.800 0 0 1 21.400 0q-10.700 4-21.400 0z" fill="#fff" opacity=".22"/><path d="M4.500 15.500l7-6v3.500h8v-3.500l7 6-7 6v-3.500h-8v3.500z" fill="#fff"/></svg>
<div class="t" style="left:1118.4px;top:126px;font-size:13px;color:#111;letter-spacing:-0.58px">Entry / Exit</div>
<svg style="left:1199px;top:92px" width="28" height="32" viewBox="0 0 28 32"><path d="M2 2l22 2v25L2 28z" fill="#a8d0ec" stroke="#8ab8d8" stroke-width=".8"/><path d="M4.500 5l17 1.600v20L4.500 25.500z" fill="#f2f6fa"/><path d="M7 9l5 .5M6 11.500l5 .5M7 14l4 .4M6 16.500l5 .5M7 19l4 .4M15 10l5 .5M16 12.500l4 .4M15 15l5 .5M16 17.500l4 .4M15 20l5 .5" stroke="#b8bec6" stroke-width="1"/><path d="M4 30l21 .5" stroke="#ddd" stroke-width="1.300"/></svg>
<div class="t" style="left:1191.6px;top:126px;font-size:13px;color:#111;letter-spacing:-1.04px">Recipes</div>
<!--/RIBBON-->
<!--WORK-->
<div class="a" style="left:345px;top:61px;width:919px;height:782px;border:1px solid #ababab"></div>
<div class="a" style="left:346px;top:200px;width:917px;height:642px;background:#383838"></div>
<div class="a" style="left:366px;top:251px;width:847px;height:541px;background:#c1cdd6"></div>
<div class="a" style="left:346px;top:306px;width:20px;height:486px;background:#c1cdd6"></div>
<div class="t" style="left:388.4px;top:266px;font-size:17.3px;color:#1c1c1c;letter-spacing:-0.61px;-webkit-text-stroke:0.4px #c1cdd6">Settings</div>
<!-- close btn -->
<div class="a" style="left:1151px;top:266px;width:18px;height:18px;border:1px solid #8e979e;background:#e4e4e4"></div>
<svg style="left:1153px;top:268px" width="14" height="14" viewBox="0 0 14 14"><circle cx="7" cy="7" r="6.300" fill="#ececec" stroke="#777" stroke-width=".8"/><circle cx="7" cy="7" r="4.700" fill="#e8203c" stroke="#999" stroke-width=".6"/><path d="M4.800 4.800l4.400 4.400M9.200 4.800l-4.400 4.400" stroke="#fff" stroke-width="1.700"/></svg>
<!-- scrollbar -->
<div class="a" style="left:1186px;top:256px;width:17px;height:494px;background:#f0f0f0;border-left:1px solid #fff"></div>
<div class="a" style="left:1187px;top:280px;width:16px;height:452px;background:#c2c2c2"></div>
<svg style="left:1191px;top:261px" width="9" height="7" viewBox="0 0 9 7"><path d="M1 5.600L4.500 2.100 8 5.600" fill="none" stroke="#555" stroke-width="1.700"/></svg>
<svg style="left:1191px;top:739px" width="9" height="7" viewBox="0 0 9 7"><path d="M1 1.200L4.500 4.700 8 1.200" fill="none" stroke="#555" stroke-width="1.700"/></svg>
<!-- tab content -->
<div class="a" style="left:378px;top:313px;width:806px;height:436px;border:1px solid #a2a6aa;background:#fff"></div>
<!-- tabs -->
<div class="a" style="left:381px;top:291px;width:91px;height:22px;border:1px solid #aab2b8;border-bottom:none;background:linear-gradient(180deg,#f4f4f4,#e4e4e4)"></div>
<div class="a" style="left:567px;top:291px;width:92px;height:22px;border:1px solid #aab2b8;border-left:none;border-bottom:none;background:linear-gradient(180deg,#f4f4f4,#e4e4e4)"></div>
<div class="a" style="left:658px;top:291px;width:110px;height:22px;border:1px solid #aab2b8;border-bottom:none;background:linear-gradient(180deg,#f4f4f4,#e4e4e4)"></div>
<div class="a" style="left:471px;top:289px;width:97px;height:25px;border:1px solid #aab2b8;border-bottom:none;background:#fff"></div>
<div class="t b" style="left:394.6px;top:297px;font-size:12.3px;color:#222;letter-spacing:-0.13px">Instruction</div>
<div class="t" style="left:480.2px;top:297px;font-size:12.5px;color:#222;letter-spacing:-0.25px">Activity Details</div>
<div class="t" style="left:576.4px;top:297px;font-size:12.5px;color:#222;letter-spacing:-0.36px">Option Codes</div>
<div class="t" style="left:667.0px;top:297px;font-size:12.5px;color:#222;letter-spacing:-0.42px">Part Assignments</div>
<!-- checkbox -->
<div class="a" style="left:396px;top:330px;width:13px;height:14px;border:1px solid #555;background:#fff"></div>
<svg style="left:398px;top:332px" width="10" height="10" viewBox="0 0 10 10"><path d="M.8 5l2.700 3.200L9 .8" fill="none" stroke="#222" stroke-width="1.700"/></svg>
<div class="t" style="left:412.8px;top:331px;font-size:12.5px;color:#333;letter-spacing:-0.34px">Is Activity Required?</div>
<div class="t" style="left:401.0px;top:369px;font-size:24px;color:#1a1a1a;letter-spacing:-0.44px;-webkit-text-stroke:0.5px #fff">Unit Configuration</div>
<div class="t" style="left:401.4px;top:405px;font-size:12.5px;color:#333;letter-spacing:-0.40px">Record History As:</div>
<div class="a" style="left:501px;top:399px;width:200px;height:22px;border:1px solid #abadb3;background:#fff"></div>
<div class="t" style="left:506.6px;top:405px;font-size:12.5px;color:#222;letter-spacing:-0.12px">Unit Configuration</div>
<div class="t" style="left:401.4px;top:429px;font-size:18px;color:#1c1c1c;letter-spacing:-0.52px;-webkit-text-stroke:0.4px #fff">Option Codes</div>
<!-- box1 -->
<div class="a" style="left:401px;top:453px;width:378px;height:114px;border:1px solid #a8a8a8;background:#fff"></div>
<div class="a" style="left:401px;top:480px;width:378px;height:1px;background:#a8a8a8"></div>
<div class="t" style="left:413.4px;top:462px;font-size:12.5px;color:#111;letter-spacing:-0.33px">Option Codes</div>
<svg style="left:749px;top:460px" width="14" height="14" viewBox="0 0 14 14"><circle cx="7" cy="7" r="6.400" fill="#f4f4f4" stroke="#6a6a6a" stroke-width=".9"/><circle cx="7" cy="7" r="5" fill="none" stroke="#b0b0b0" stroke-width=".7"/><circle cx="7" cy="7" r="4.200" fill="#35a535"/><path d="M4 7h5M7 4.500L9.700 7 7 9.500" stroke="#fff" stroke-width="1.500" fill="none"/></svg>
<!-- box2 -->
<div class="a" style="left:783px;top:453px;width:378px;height:114px;border:1px solid #a8a8a8;background:#fff"></div>
<div class="a" style="left:783px;top:480px;width:378px;height:1px;background:#a8a8a8"></div>
<div class="t" style="left:795.0px;top:462px;font-size:12.5px;color:#111;letter-spacing:-0.32px">Available Option Codes</div>
<svg style="left:1131px;top:460px" width="14" height="14" viewBox="0 0 14 14"><circle cx="7" cy="7" r="6.400" fill="#f4f4f4" stroke="#6a6a6a" stroke-width=".9"/><circle cx="7" cy="7" r="5" fill="none" stroke="#b0b0b0" stroke-width=".7"/><circle cx="7" cy="7" r="4.200" fill="#dc2436"/><path d="M3.800 7h6.400" stroke="#fff" stroke-width="1.800"/></svg>
<!-- tree1 -->
<svg style="left:409px;top:488px" width="6" height="6" viewBox="0 0 6 6"><path d="M5.500 0V5.500H0z" fill="#555"/></svg>
<svg style="left:425px;top:484px" width="14" height="13" viewBox="0 0 14 13"><path d="M2.500 1.500h5l1 1h4v8.500h-10z" fill="#f6cf5a" stroke="#c8961e" stroke-width=".8"/><path d="M.8 3.500h10.500v8.500H.8z" fill="#f8c23a" stroke="#c8961e" stroke-width=".8"/><rect x="4.500" y="5" width="5" height="3.500" fill="#fdf0c0" stroke="#c8961e" stroke-width=".5"/></svg>
<div class="t" style="left:442.4px;top:486px;font-size:12.5px;color:#333;letter-spacing:-0.16px">Configuration Options</div>
<svg style="left:445px;top:507px" width="14" height="9" viewBox="0 0 14 9"><rect x=".5" y=".5" width="13" height="8" rx="1.500" fill="#f0f0f0" stroke="#8a8a8a"/><path d="M2 2.400h10" stroke="#555" stroke-width=".9"/><path d="M2.500 2v4.300M4.800 2v2.800M7 2v2.800M9.200 2v2.800M11.500 2v4.300" stroke="#333" stroke-width="1"/><path d="M3.500 7h7" stroke="#c4ccd4" stroke-width=".8"/></svg>
<div class="t b" style="left:469.0px;top:506px;font-size:12.3px;color:#333;letter-spacing:-1.20px">JP</div>
<svg style="left:445px;top:527px" width="14" height="9" viewBox="0 0 14 9"><rect x=".5" y=".5" width="13" height="8" rx="1.500" fill="#f0f0f0" stroke="#8a8a8a"/><path d="M2 2.400h10" stroke="#555" stroke-width=".9"/><path d="M2.500 2v4.300M4.800 2v2.800M7 2v2.800M9.200 2v2.800M11.500 2v4.300" stroke="#333" stroke-width="1"/><path d="M3.500 7h7" stroke="#c4ccd4" stroke-width=".8"/></svg>
<div class="t b" style="left:469.0px;top:526px;font-size:12.3px;color:#333;letter-spacing:-1.20px">US</div>
<!-- tree2 -->
<div class="a" style="left:824px;top:481px;width:336px;height:20px;background:#dcdcdc"></div>
<svg style="left:807px;top:486px" width="14" height="9" viewBox="0 0 14 9"><rect x=".5" y=".5" width="13" height="8" rx="1.500" fill="#f0f0f0" stroke="#8a8a8a"/><path d="M2 2.400h10" stroke="#555" stroke-width=".9"/><path d="M2.500 2v4.300M4.800 2v2.800M7 2v2.800M9.200 2v2.800M11.500 2v4.300" stroke="#333" stroke-width="1"/><path d="M3.500 7h7" stroke="#c4ccd4" stroke-width=".8"/></svg>
<div class="t b" style="left:827.2px;top:486px;font-size:12.3px;color:#333;letter-spacing:-0.20px">CN</div>
<div class="t" style="left:402.0px;top:577px;font-size:18px;color:#1c1c1c;letter-spacing:-0.70px;-webkit-text-stroke:0.4px #fff">Validation Rule</div>
<!-- box3 -->
<div class="a" style="left:401px;top:601px;width:378px;height:113px;border:1px solid #a8a8a8;background:#fff"></div>
<div class="a" style="left:401px;top:628px;width:378px;height:1px;background:#a8a8a8"></div>
<div class="t" style="left:413.4px;top:610px;font-size:12.5px;color:#111;letter-spacing:-0.33px">Option Codes</div>
<svg style="left:749px;top:608px" width="14" height="14" viewBox="0 0 14 14"><circle cx="7" cy="7" r="6.400" fill="#f4f4f4" stroke="#6a6a6a" stroke-width=".9"/><circle cx="7" cy="7" r="5" fill="none" stroke="#b0b0b0" stroke-width=".7"/><circle cx="7" cy="7" r="4.200" fill="#35a535"/><path d="M4 7h5M7 4.500L9.700 7 7 9.500" stroke="#fff" stroke-width="1.500" fill="none"/></svg>
<!-- box4 -->
<div class="a" style="left:783px;top:601px;width:378px;height:113px;border:1px solid #a8a8a8;background:#fff"></div>
<div class="a" style="left:783px;top:628px;width:378px;height:1px;background:#a8a8a8"></div>
<div class="t" style="left:794.8px;top:610px;font-size:12.5px;color:#111;letter-spacing:-0.49px">Logical Expression</div>
<svg style="left:1131px;top:608px" width="14" height="14" viewBox="0 0 14 14"><circle cx="7" cy="7" r="6.400" fill="#f4f4f4" stroke="#6a6a6a" stroke-width=".9"/><circle cx="7" cy="7" r="5" fill="none" stroke="#b0b0b0" stroke-width=".7"/><circle cx="7" cy="7" r="4.200" fill="#dc2436"/><path d="M3.800 7h6.400" stroke="#fff" stroke-width="1.800"/></svg>
<!-- tree3 -->
<svg style="left:409px;top:636px" width="6" height="6" viewBox="0 0 6 6"><path d="M5.500 0V5.500H0z" fill="#555"/></svg>
<svg style="left:425px;top:632px" width="14" height="13" viewBox="0 0 14 13"><path d="M2.500 1.500h5l1 1h4v8.500h-10z" fill="#f6cf5a" stroke="#c8961e" stroke-width=".8"/><path d="M.8 3.500h10.500v8.500H.8z" fill="#f8c23a" stroke="#c8961e" stroke-width=".8"/><rect x="4.500" y="5" width="5" height="3.500" fill="#fdf0c0" stroke="#c8961e" stroke-width=".5"/></svg>
<div class="t" style="left:442.4px;top:634px;font-size:12.5px;color:#333;letter-spacing:-0.16px">Configuration Options</div>
<div class="a" style="left:462px;top:649px;width:299px;height:20px;background:#dcdcdc"></div>
<svg style="left:445px;top:655px" width="14" height="9" viewBox="0 0 14 9"><rect x=".5" y=".5" width="13" height="8" rx="1.500" fill="#f0f0f0" stroke="#8a8a8a"/><path d="M2 2.400h10" stroke="#555" stroke-width=".9"/><path d="M2.500 2v4.300M4.800 2v2.800M7 2v2.800M9.200 2v2.800M11.500 2v4.300" stroke="#333" stroke-width="1"/><path d="M3.500 7h7" stroke="#c4ccd4" stroke-width=".8"/></svg>
<div class="t b" style="left:469.2px;top:654px;font-size:12.3px;color:#333;letter-spacing:-0.90px">CN</div>
<svg style="left:445px;top:675px" width="14" height="9" viewBox="0 0 14 9"><rect x=".5" y=".5" width="13" height="8" rx="1.500" fill="#f0f0f0" stroke="#8a8a8a"/><path d="M2 2.400h10" stroke="#555" stroke-width=".9"/><path d="M2.500 2v4.300M4.800 2v2.800M7 2v2.800M9.200 2v2.800M11.500 2v4.300" stroke="#333" stroke-width="1"/><path d="M3.500 7h7" stroke="#c4ccd4" stroke-width=".8"/></svg>
<div class="t b" style="left:469.0px;top:674px;font-size:12.3px;color:#333;letter-spacing:-1.20px">DE</div>
<svg style="left:445px;top:695px" width="14" height="9" viewBox="0 0 14 9"><rect x=".5" y=".5" width="13" height="8" rx="1.500" fill="#f0f0f0" stroke="#8a8a8a"/><path d="M2 2.400h10" stroke="#555" stroke-width=".9"/><path d="M2.500 2v4.300M4.800 2v2.800M7 2v2.800M9.200 2v2.800M11.500 2v4.300" stroke="#333" stroke-width="1"/><path d="M3.500 7h7" stroke="#c4ccd4" stroke-width=".8"/></svg>
<div class="t b" style="left:469.0px;top:694px;font-size:12.3px;color:#333;letter-spacing:-1.20px">JP</div>
<!-- tree3 scrollbar -->
<div class="a" style="left:762px;top:629px;width:16px;height:84px;background:#f0f0f0"></div>
<div class="a" style="left:762px;top:646px;width:16px;height:39px;background:#c2c2c2"></div>
<svg style="left:766px;top:635px" width="9" height="6" viewBox="0 0 9 6"><path d="M1 5l3.500-3.500L8 5" fill="none" stroke="#555" stroke-width="1.400"/></svg>
<svg style="left:766px;top:700px" width="9" height="6" viewBox="0 0 9 6"><path d="M1 1l3.500 3.500L8 1" fill="none" stroke="#555" stroke-width="1.400"/></svg>
<!-- logic buttons -->
<div class="lb" style="left:789px">AND</div>
<div class="lb" style="left:849px">OR</div>
<div class="lb" style="left:909px">NOT</div>
<div class="lb" style="left:969px">(</div>
<div class="lb" style="left:1029px">)</div>
<div class="lb" style="left:1089px">( )</div>
<!-- OK -->
<div class="lb" style="left:1123px;top:760px;width:75px;height:22px;line-height:20px;font-size:12.500px;letter-spacing:-0.3px">OK</div>
<!--/WORK-->
</body></html>
